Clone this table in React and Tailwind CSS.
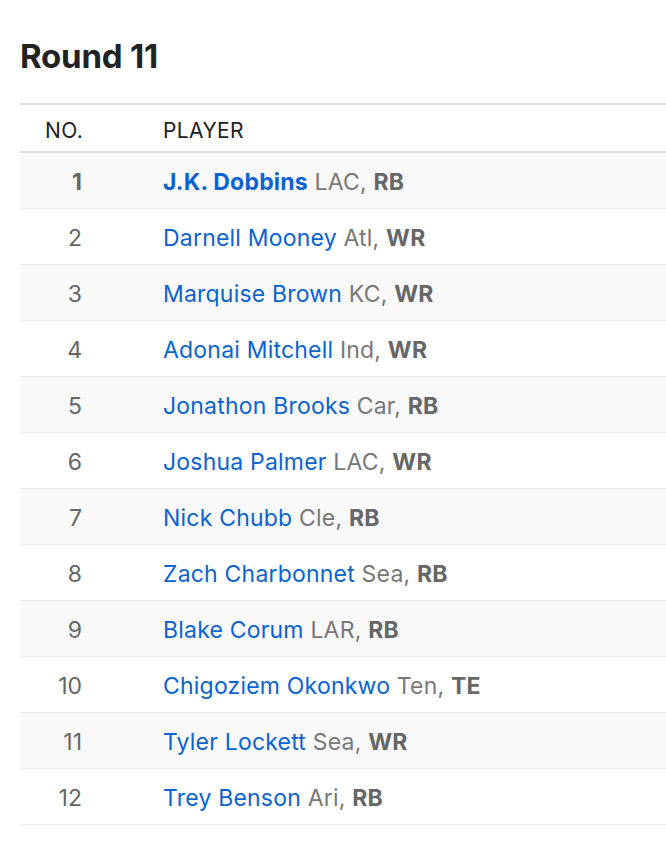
import React from 'react';

const picks = [
    { no: 1, name: 'J.K. Dobbins', team: 'LAC', pos: 'RB' },
    { no: 2, name: 'Darnell Mooney', team: 'Atl', pos: 'WR' },
    { no: 3, name: 'Marquise Brown', team: 'KC', pos: 'WR' },
    { no: 4, name: 'Adonai Mitchell', team: 'Ind', pos: 'WR' },
    { no: 5, name: 'Jonathon Brooks', team: 'Car', pos: 'RB' },
    { no: 6, name: 'Joshua Palmer', team: 'LAC', pos: 'WR' },
    { no: 7, name: 'Nick Chubb', team: 'Cle', pos: 'RB' },
    { no: 8, name: 'Zach Charbonnet', team: 'Sea', pos: 'RB' },
    { no: 9, name: 'Blake Corum', team: 'LAR', pos: 'RB' },
    { no: 10, name: 'Chigoziem Okonkwo', team: 'Ten', pos: 'TE' },
    { no: 11, name: 'Tyler Lockett', team: 'Sea', pos: 'WR' },
    { no: 12, name: 'Trey Benson', team: 'Ari', pos: 'RB' },
];

const App = () => {
    return (
        <div className="min-h-screen bg-white pl-5 pt-[35px] font-['Inter',sans-serif] text-[#222]">
            <h1 className="text-[33px] font-bold leading-[42px] tracking-[-0.2px]">Round 11</h1>

            <table className="mt-[26px] w-[646px] border-collapse">
                <thead>
                    <tr className="border-t-2 border-b-2 border-[#dedede]">
                        <th className="h-[48px] w-[80px] pr-[17px] pt-[5px] text-right text-[21px] font-normal tracking-[0.3px] text-[#222]">
                            NO.
                        </th>
                        <th className="pl-[63px] pt-[5px] text-left text-[21px] font-normal tracking-[0.4px] text-[#222]">
                            PLAYER
                        </th>
                    </tr>
                </thead>
                <tbody>
                    {picks.map((p) => (
                        <tr
                            key={p.no}
                            className={`border-b border-[#ececec] ${p.no % 2 === 1 ? 'bg-[#f9f9f9]' : 'bg-white'}`}
                        >
                            <td
                                className={`h-[56px] pr-[18px] pt-[4px] text-right text-[23px] text-[#666] ${p.no === 1 ? 'font-bold' : ''}`}
                            >
                                {p.no}
                            </td>
                            <td className="pl-[63px] pt-[4px] text-[23px] tracking-[0.2px] text-[#777]">
                                <span className={`text-[#0b63ce] ${p.no === 1 ? 'font-bold' : ''}`}>{p.name}</span>{' '}
                                {p.team}, <span className="font-bold text-[#666]">{p.pos}</span>
                            </td>
                        </tr>
                    ))}
                </tbody>
            </table>
        </div>
    );
};

export default App;
